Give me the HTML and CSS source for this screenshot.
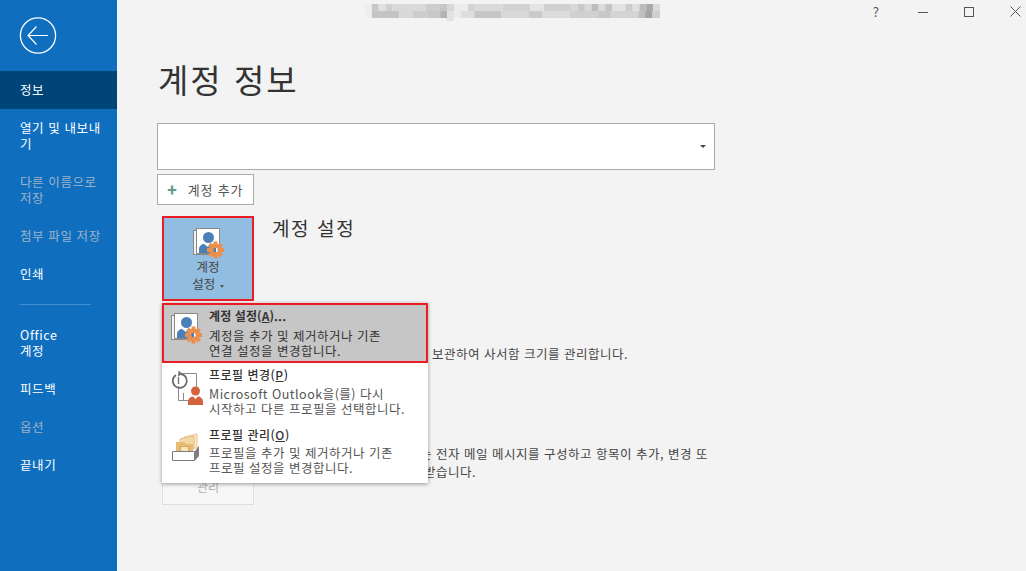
FILE: index.html
```html
<!DOCTYPE html>
<html lang="ko">
<head>
<meta charset="utf-8">
<title>계정 정보</title>
<link rel="stylesheet" href="styles.css">
</head>
<body>
<aside class="sidebar">
  <div class="back-wrap">
    <svg class="back" width="38" height="38" viewBox="0 0 38 38" fill="none" stroke="#fff">
      <circle cx="19" cy="18.5" r="17.6" stroke-width="1.3"/>
      <path d="M9 18.5H29M17.5 9.5L9 18.5L17.5 27.5" stroke-width="1.2"/>
    </svg>
  </div>
  <nav class="nav">
    <div class="nav-item active">정보</div>
    <div class="nav-item">열기 및 내보내기</div>
    <div class="nav-item dim">다른 이름으로 저장</div>
    <div class="nav-item dim">첨부 파일 저장</div>
    <div class="nav-item">인쇄</div>
    <div class="nav-sep"></div>
    <div class="nav-item">Office<br>계정</div>
    <div class="nav-item">피드백</div>
    <div class="nav-item dim">옵션</div>
    <div class="nav-item">끝내기</div>
  </nav>
</aside>
<main class="main">
  <header class="titlebar">
    <svg class="blur" width="295" height="18" viewBox="-5.5 0 237.5 18" preserveAspectRatio="none">
      <g>
        <rect x="-5.500" y="0" width="5.500" height="14" fill="#efefef"/>
        <rect x="0" y="0" width="5.500" height="7" fill="#c8c8c8"/><rect x="5.500" y="0" width="5.500" height="7" fill="#e0e0e0"/><rect x="11" y="0" width="5.500" height="7" fill="#d0d0d0"/><rect x="16.500" y="0" width="27" height="7" fill="#d9d9d9"/><rect x="43.500" y="0" width="11" height="7" fill="#cdcdcd"/><rect x="54.500" y="0" width="6" height="7" fill="#c6c6c6"/><rect x="60.500" y="0" width="6" height="7" fill="#d8d8d8"/><rect x="66.500" y="0" width="11" height="7" fill="#ececec"/><rect x="77.500" y="0" width="6" height="7" fill="#d4d4d4"/><rect x="83.500" y="0" width="22" height="7" fill="#dadada"/><rect x="105.500" y="0" width="22" height="7" fill="#d2d2d2"/><rect x="127.500" y="0" width="11" height="7" fill="#e4e4e4"/><rect x="138.500" y="0" width="22" height="7" fill="#d0d0d0"/><rect x="160.500" y="0" width="5.500" height="7" fill="#d8d8d8"/><rect x="166" y="0" width="5.500" height="7" fill="#c8c8c8"/><rect x="171.500" y="0" width="5.500" height="7" fill="#d8d8d8"/><rect x="177" y="0" width="5.500" height="7" fill="#bcbcbc"/><rect x="182.500" y="0" width="5.500" height="7" fill="#dadada"/><rect x="188" y="0" width="5.500" height="7" fill="#c4c4c4"/><rect x="193.500" y="0" width="11" height="7" fill="#e2e2e2"/><rect x="204.500" y="0" width="5.500" height="7" fill="#cccccc"/><rect x="210" y="0" width="5.500" height="7" fill="#e0e0e0"/><rect x="215.500" y="0" width="5.500" height="7" fill="#bdbdbd"/><rect x="221" y="0" width="5.500" height="7" fill="#a8a8a8"/><rect x="226.500" y="0" width="5.500" height="7" fill="#dadada"/>
        <rect x="0" y="7" width="22" height="7" fill="#c4c4c4"/><rect x="22" y="7" width="11" height="7" fill="#d8d8d8"/><rect x="33" y="7" width="11" height="7" fill="#cccccc"/><rect x="44" y="7" width="11" height="7" fill="#c8c8c8"/><rect x="55" y="7" width="5.500" height="7" fill="#b4b4b4"/><rect x="60.500" y="7" width="5.500" height="7" fill="#e2e2e2"/><rect x="66" y="7" width="5.500" height="7" fill="#ececec"/><rect x="71.500" y="7" width="11" height="7" fill="#dedede"/><rect x="82.500" y="7" width="22" height="7" fill="#c6c6c6"/><rect x="104.500" y="7" width="22" height="7" fill="#d8d8d8"/><rect x="126.500" y="7" width="11" height="7" fill="#cacaca"/><rect x="137.500" y="7" width="22" height="7" fill="#dcdcdc"/><rect x="159.500" y="7" width="22" height="7" fill="#d0d0d0"/><rect x="181.500" y="7" width="11" height="7" fill="#c8c8c8"/><rect x="192.500" y="7" width="22" height="7" fill="#d4d4d4"/><rect x="214.500" y="7" width="5.500" height="7" fill="#c0c0c0"/><rect x="220" y="7" width="6" height="7" fill="#a4a4a4"/><rect x="226" y="7" width="6" height="7" fill="#d0d0d0"/>
        <rect x="60" y="14" width="6" height="3" fill="#e2e2e2"/>
      </g>
    </svg>
    <div class="win-controls">
      <span class="help">?</span>
      <svg width="10" height="10" viewBox="0 0 10 10"><path d="M0 5.500H10" stroke="#555"/></svg>
      <svg width="10" height="10" viewBox="0 0 10 10" fill="none"><rect x=".5" y=".5" width="9" height="9" stroke="#555"/></svg>
      <svg width="11" height="11" viewBox="0 0 11 11" fill="none"><path d="M.5 .5L10.500 10.500M10.500 .5L.5 10.500" stroke="#555"/></svg>
    </div>
  </header>
  <h1 class="page-title">계정 정보</h1>
  <div class="account-select"><span class="select-caret"></span></div>
  <button class="add-btn"><span class="plus">✚</span>계정 추가</button>

  <section class="settings-row">
    <div class="tool-column">
      <button class="tool-btn selected">
        <svg class="tool-icon" width="32" height="32" viewBox="0 0 32 32">
          <use href="#acct"/>
        </svg>
        <span class="tool-label">계정<br>설정 <i class="mini-caret"></i></span>
      </button>
      <div class="menu">
        <div class="menu-item current">
          <svg class="menu-icon" width="32" height="32" viewBox="0 0 32 32"><use href="#acct"/></svg>
          <div class="menu-text">
            <div class="menu-title">계정 설정(<u>A</u>)...</div>
            <div class="menu-desc">계정을 추가 및 제거하거나 기존<br>연결 설정을 변경합니다.</div>
          </div>
        </div>
        <div class="menu-item">
          <svg class="menu-icon" width="32" height="40" viewBox="0 0 32 40" fill="none">
            <path d="M11 4.500H25.500V18M7.500 17V31.500H18M12.500 24V31.500" stroke="#8a8a8a"/>
            <path d="M5 6A7 7 0 1 0 10 5" stroke="#6e6e6e" stroke-width="1.800"/>
            <path d="M7.500 1.500L11.500 5L7 7.500Z" fill="#6e6e6e"/>
            <path d="M7.500 8V15" stroke="#6e6e6e" stroke-width="1.300"/>
            <circle cx="24.500" cy="22" r="4.500" fill="#d4623c"/>
            <path d="M17 36V32.500C17 29.500 20 27.500 22 27.500L24.500 30L27 27.500C29 27.500 32 29.500 32 32.500V36Z" fill="#d4623c"/>
          </svg>
          <div class="menu-text">
            <div class="menu-title">프로필 변경(<u>P</u>)</div>
            <div class="menu-desc">Microsoft Outlook을(를) 다시<br>시작하고 다른 프로필을 선택합니다.</div>
          </div>
        </div>
        <div class="menu-item">
          <svg class="menu-icon" width="32" height="30" viewBox="0 0 32 30" fill="none">
            <path d="M13 4L26 1V15H13Z" fill="#f8e8c8" stroke="#e8c88c"/>
            <path d="M9 6L23 3V16H9Z" fill="#f2d8a6" stroke="#e4bf80"/>
            <path d="M5 9H14L15 11H22V20H5Z" fill="#e7bd74"/>
            <rect x="9.500" y="13.500" width="8" height="5" fill="#f6e3bd" stroke="#d4a860"/>
            <path d="M1.500 18.500H23.500V27.500H1.500Z" fill="#fff" stroke="#7d7d7d"/>
            <path d="M24 18L28 13V23L24 27.500Z" fill="#7d7d7d"/>
          </svg>
          <div class="menu-text">
            <div class="menu-title">프로필 관리(<u>O</u>)</div>
            <div class="menu-desc">프로필을 추가 및 제거하거나 기존<br>프로필 설정을 변경합니다.</div>
          </div>
        </div>
      </div>
    </div>
    <h2 class="section-title">계정 설정</h2>
  </section>

  <section class="info-row mailbox">
    <div class="tool-spacer"></div>
    <p class="info-text">지운 편지함의 항목을 비우고 보관하여 사서함 크기를 관리합니다.</p>
  </section>

  <section class="info-row rules">
    <div class="tool-btn ghost"><span class="ghost-label">관리</span></div>
    <p class="info-text">규칙 및 알림을 사용하여 받는 전자 메일 메시지를 구성하고 항목이 추가, 변경 또는 항목이 제거될 때 알림을 받습니다.</p>
  </section>
</main>
<svg class="defs" width="0" height="0">
  <defs>
    <symbol id="acct" viewBox="0 0 32 32">
      <rect x=".5" y="2.500" width="24" height="24" fill="#f2f2f2" stroke="#8a8a8a"/>
      <rect x="3.500" y=".5" width="23" height="25" fill="#fff" stroke="#8a8a8a"/>
      <circle cx="15.500" cy="9.500" r="5.500" fill="#4a7fb8"/>
      <path d="M6 25V21C6 18 9 16 11 16L15 19L18 16C20 16 22 17 23 19V25Z" fill="#4a7fb8"/>
      <g fill="#e9904e" transform="translate(22.500 22)">
        <path fill-rule="evenodd" d="M0 -6.500A6.500 6.500 0 1 1 0 6.500A6.500 6.500 0 1 1 0 -6.500ZM0 -2.200A2.200 2.200 0 1 0 0 2.200A2.200 2.200 0 1 0 0 -2.200Z"/>
        <rect x="-2" y="-8.500" width="4" height="3"/>
        <rect x="-2" y="5.500" width="4" height="3"/>
        <rect x="-8.500" y="-2" width="3" height="4"/>
        <rect x="5.500" y="-2" width="3" height="4"/>
        <rect x="-2" y="-8.500" width="4" height="3" transform="rotate(45)"/>
        <rect x="-2" y="5.500" width="4" height="3" transform="rotate(45)"/>
        <rect x="-8.500" y="-2" width="3" height="4" transform="rotate(45)"/>
        <rect x="5.500" y="-2" width="3" height="4" transform="rotate(45)"/>
      </g>
    </symbol>
  </defs>
</svg>
</body>
</html>
```
FILE: styles.css
```css
* { box-sizing: border-box; }
html, body { margin: 0; height: 100%; }
body {
  display: flex;
  width: 1026px;
  height: 571px;
  overflow: hidden;
  background: #f3f3f3;
  color: #444;
  font-family: "Noto Sans CJK KR", "Noto Sans", sans-serif;
  font-size: 12px;
}
.defs { position: absolute; }
.sidebar {
  flex: 0 0 117px;
  background: #106ebe;
  color: #fff;
}
.back-wrap { height: 71px; padding: 17px 0 0 19px; }
.back { display: block; }
.nav { display: flex; flex-direction: column; }
.nav-item {
  padding: 11px 10px 11px 20px;
  font-size: 12.500px;
  line-height: 16px;
  letter-spacing: .6px;
}
.nav-item.active { background: #004578; height: 38px; }
.nav-item.dim { color: #9eb3c8; }
.nav-sep { height: 1px; margin: 11px 26px 11px 20px; background: #3e8fd3; }
.main { flex: 1; padding-left: 40px; min-width: 0; }
.titlebar { display: flex; height: 23px; padding-top: 4px; margin-left: 208px; }
.blur { display: block; }
.win-controls {
  display: flex;
  align-items: center;
  margin-left: auto;
  height: 15px;
  gap: 36px;
  padding-right: 5px;
}
.help { font-size: 13px; color: #555; margin-right: 3px; }
.page-title {
  margin: 36px 0 0 1px;
  height: 40px;
  font-size: 33px;
  line-height: 40px;
  font-weight: 400;
  color: #333;
  letter-spacing: 2px;
}
.account-select {
  width: 558px;
  height: 47px;
  margin-top: 24px;
  background: #fff;
  border: 1px solid #ababab;
  position: relative;
}
.select-caret {
  position: absolute;
  right: 8px;
  top: 21px;
  border: 3px solid transparent;
  border-top: 3px solid #444;
}
.add-btn {
  display: flex;
  align-items: center;
  width: 97px;
  height: 31px;
  margin-top: 4px;
  padding: 0 0 0 9px;
  background: #fff;
  border: 1px solid #ababab;
  font: inherit;
  font-size: 13px;
  color: #555;
  letter-spacing: .8px;
}
.plus { color: #5e9e84; font-size: 10px; margin-right: 10px; }
.settings-row { display: flex; margin: 11px 0 0 5px; height: 85px; }
.tool-column { position: relative; width: 92px; }
.tool-btn {
  display: flex;
  flex-direction: column;
  align-items: center;
  width: 92px;
  height: 85px;
  padding: 0;
  font: inherit;
  color: #444;
}
.tool-btn.selected {
  background: #91bee0;
  border: 2px solid #ed1c24;
  padding-top: 10px;
}
.tool-icon { display: block; margin-left: 1px; }
.tool-label { font-size: 12.500px; line-height: 17px; margin-top: -2px; text-align: center; }
.mini-caret {
  display: inline-block;
  border: 2.500px solid transparent;
  border-top: 3px solid #555;
  margin-left: 1px;
  vertical-align: -1px;
}
.section-title {
  margin: -1px 0 0 18px;
  font-size: 19px;
  line-height: 26px;
  font-weight: 400;
  color: #333;
  letter-spacing: 1.600px;
}
.menu {
  position: absolute;
  z-index: 2;
  left: 0;
  top: 87px;
  width: 266px;
  height: 180px;
  background: #fff;
  box-shadow: 0 1px 4px rgba(0, 0, 0, .4);
}
.menu-item { display: flex; height: 60px; padding: 5px 0 0 9px; }
.menu-item.current { background: #c6c6c6; border: 2px solid #ed1c24; padding: 3px 0 0 7px; height: 60px; }
.menu-item:nth-child(2) { padding-top: 4px; }
.menu-item:nth-child(3) { padding-top: 4px; }
.menu-icon { flex: none; margin-top: 5px; width: 32px; }
.menu-item:nth-child(2) .menu-icon { margin-top: 2px; }
.menu-item:nth-child(3) .menu-icon { margin-top: 6px; }
.menu-text { margin-left: 6px; }
.menu-title { font-size: 12px; line-height: 16px; font-weight: 500; color: #333; letter-spacing: .5px; }
.menu-item.current .menu-title { font-weight: 700; letter-spacing: .1px; }
.menu-desc { font-size: 12.500px; line-height: 15px; margin-top: 3px; color: #555; letter-spacing: .5px; white-space: nowrap; }
.menu-item.current .menu-desc { color: #333; margin-top: 4px; }
.menu-item:nth-child(3) .menu-desc { margin-top: 2px; }
.info-row { display: flex; margin-left: 5px; }
.mailbox { margin-top: 44px; }
.tool-spacer { flex: 0 0 92px; }
.info-text {
  margin: 0 0 0 18px;
  width: 438px;
  font-size: 12.500px;
  line-height: 18px;
  color: #444;
  letter-spacing: .5px;
  word-break: break-all;
}
.mailbox .info-text { white-space: nowrap; }
.rules { margin-top: 58px; }
.rules .info-text { margin-top: 24px; }
.tool-btn.ghost {
  flex: none;
  height: 84px;
  background: #f7f7f7;
  border: 1px solid #dedede;
  justify-content: flex-end;
  padding-bottom: 9px;
}
.ghost-label { color: #b0b0b0; font-size: 12px; line-height: 16px; }
```
